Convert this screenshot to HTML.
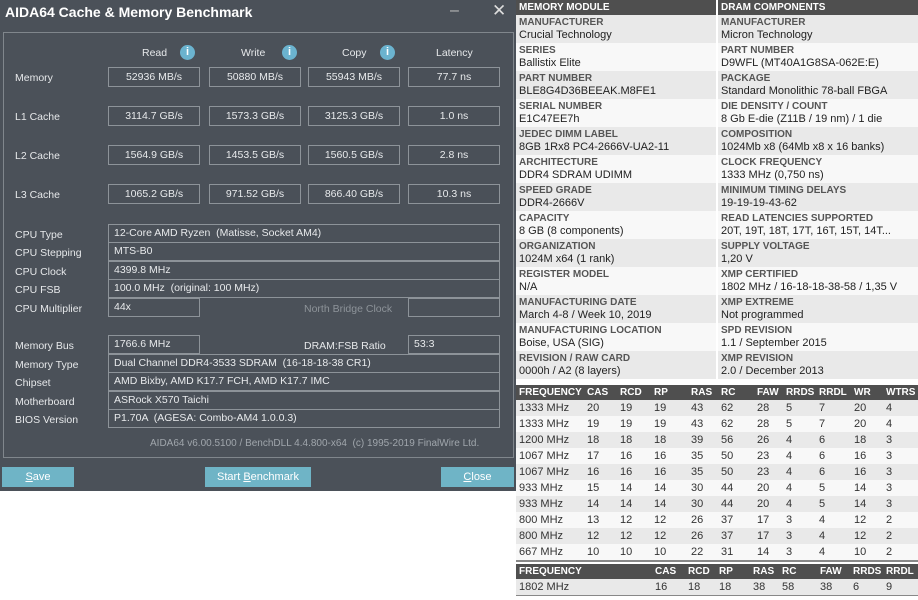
<!DOCTYPE html>
<html><head><meta charset="utf-8"><style>
*{margin:0;padding:0;box-sizing:border-box}
body{width:918px;height:600px;background:#fff;position:relative;overflow:hidden;font-family:"Liberation Sans",sans-serif}
#win{position:absolute;left:0;top:0;width:516px;height:491px;background:#4b5159;color:#e6e8ea}
.t{position:absolute;font-size:10.5px;white-space:nowrap}
.box{position:absolute;border:1px solid #8d9399;background:#4a5058;height:20px;font-size:10.5px;text-align:center;line-height:18px;color:#e8eaec}
.ib{position:absolute;border:1px solid #8d9399;height:19px;font-size:10.5px;line-height:17px;padding-left:5px;color:#e8eaec}
.info{position:absolute;width:15px;height:15px;border-radius:50%;background:#6bb3cf;color:#fff;font-weight:bold;font-size:11px;text-align:center;line-height:15px}
.btn{position:absolute;top:467px;height:20px;background:#6fb4c6;color:#fff;font-size:11px;text-align:center;line-height:20px}
#rp{position:absolute;left:516px;top:0;width:402px;height:600px;background:#fff}
.hd{position:absolute;height:15px;background:#4f4f4f;color:#fff;font-weight:bold;font-size:10px;line-height:15px;padding-left:3px}
.cell{position:absolute;height:28px;padding-left:3px;font-size:11px;color:#222}
.cell b{display:block;font-size:10px;color:#555;line-height:13px;margin-top:1px}
.cell span{display:block;line-height:13px}
.g{background:#e9e9e9}.w{background:#f8f8f8}
.tr{position:absolute;left:0;width:402px;height:16px;font-size:11px;color:#333;line-height:16px}
.tr i,.th i{position:absolute;font-style:normal}
.th{position:absolute;left:0;width:402px;height:15px;background:#4f4f4f;color:#fff;font-weight:bold;font-size:10px;line-height:15px}
</style></head><body>
<div id="win">
<div class="t" style="left:5px;top:4px;font-size:14px;font-weight:bold;color:#fff">AIDA64 Cache &amp; Memory Benchmark</div>
<div class="t" style="left:450px;top:2px;font-size:16px;color:#bbb">–</div>
<div class="t" style="left:492px;top:1px;font-size:17px;color:#ddd">✕</div>
<div style="position:absolute;left:3px;top:32px;width:511px;height:426px;border:1px solid #80868c"></div>
<div class="t" style="left:142px;top:47px">Read</div><div class="info" style="left:180px;top:45px">i</div>
<div class="t" style="left:241px;top:47px">Write</div><div class="info" style="left:282px;top:45px">i</div>
<div class="t" style="left:342px;top:47px">Copy</div><div class="info" style="left:380px;top:45px">i</div>
<div class="t" style="left:436px;top:47px">Latency</div>

<div class="t" style="left:15px;top:72px">Memory</div>
<div class="box" style="left:108px;top:67px;width:92px">52936 MB/s</div><div class="box" style="left:209px;top:67px;width:92px">50880 MB/s</div><div class="box" style="left:308px;top:67px;width:92px">55943 MB/s</div><div class="box" style="left:408px;top:67px;width:92px">77.7 ns</div>
<div class="t" style="left:15px;top:111px">L1 Cache</div>
<div class="box" style="left:108px;top:106px;width:92px">3114.7 GB/s</div><div class="box" style="left:209px;top:106px;width:92px">1573.3 GB/s</div><div class="box" style="left:308px;top:106px;width:92px">3125.3 GB/s</div><div class="box" style="left:408px;top:106px;width:92px">1.0 ns</div>
<div class="t" style="left:15px;top:150px">L2 Cache</div>
<div class="box" style="left:108px;top:145px;width:92px">1564.9 GB/s</div><div class="box" style="left:209px;top:145px;width:92px">1453.5 GB/s</div><div class="box" style="left:308px;top:145px;width:92px">1560.5 GB/s</div><div class="box" style="left:408px;top:145px;width:92px">2.8 ns</div>
<div class="t" style="left:15px;top:189px">L3 Cache</div>
<div class="box" style="left:108px;top:184px;width:92px">1065.2 GB/s</div><div class="box" style="left:209px;top:184px;width:92px">971.52 GB/s</div><div class="box" style="left:308px;top:184px;width:92px">866.40 GB/s</div><div class="box" style="left:408px;top:184px;width:92px">10.3 ns</div>

<div class="t" style="left:15px;top:229px">CPU Type</div><div class="ib" style="left:108px;top:224px;width:392px">12-Core AMD Ryzen &nbsp;(Matisse, Socket AM4)</div>
<div class="t" style="left:15px;top:247px">CPU Stepping</div><div class="ib" style="left:108px;top:242px;width:392px">MTS-B0</div>
<div class="t" style="left:15px;top:266px">CPU Clock</div><div class="ib" style="left:108px;top:261px;width:392px">4399.8 MHz</div>
<div class="t" style="left:15px;top:284px">CPU FSB</div><div class="ib" style="left:108px;top:279px;width:392px">100.0 MHz &nbsp;(original: 100 MHz)</div>
<div class="t" style="left:15px;top:303px">CPU Multiplier</div><div class="ib" style="left:108px;top:298px;width:92px">44x</div>
<div class="t" style="left:304px;top:303px;color:#8d9399">North Bridge Clock</div><div class="ib" style="left:408px;top:298px;width:92px"></div>

<div class="t" style="left:15px;top:340px">Memory Bus</div><div class="ib" style="left:108px;top:335px;width:92px">1766.6 MHz</div>
<div class="t" style="left:304px;top:340px">DRAM:FSB Ratio</div><div class="ib" style="left:408px;top:335px;width:92px">53:3</div>
<div class="t" style="left:15px;top:359px">Memory Type</div><div class="ib" style="left:108px;top:354px;width:392px">Dual Channel DDR4-3533 SDRAM &nbsp;(16-18-18-38 CR1)</div>
<div class="t" style="left:15px;top:377px">Chipset</div><div class="ib" style="left:108px;top:372px;width:392px">AMD Bixby, AMD K17.7 FCH, AMD K17.7 IMC</div>
<div class="t" style="left:15px;top:396px">Motherboard</div><div class="ib" style="left:108px;top:391px;width:392px">ASRock X570 Taichi</div>
<div class="t" style="left:15px;top:414px">BIOS Version</div><div class="ib" style="left:108px;top:409px;width:392px">P1.70A &nbsp;(AGESA: Combo-AM4 1.0.0.3)</div>
<div class="t" style="left:150px;top:438px;color:#a0a6ac;font-size:10px">AIDA64 v6.00.5100 / BenchDLL 4.4.800-x64 &nbsp;(c) 1995-2019 FinalWire Ltd.</div>
<div class="btn" style="left:2px;width:72px"><u>S</u>ave</div>
<div class="btn" style="left:205px;width:106px">Start <u>B</u>enchmark</div>
<div class="btn" style="left:441px;width:73px"><u>C</u>lose</div>
</div>

<div id="rp">
<div class="hd" style="left:0;top:0;width:200px">MEMORY MODULE</div>
<div class="hd" style="left:202px;top:0;width:200px">DRAM COMPONENTS</div>
<div class="cell g" style="left:0;top:15px;width:200px"><b>MANUFACTURER</b><span>Crucial Technology</span></div>
<div class="cell g" style="left:202px;top:15px;width:200px"><b>MANUFACTURER</b><span>Micron Technology</span></div>
<div class="cell w" style="left:0;top:43px;width:200px"><b>SERIES</b><span>Ballistix Elite</span></div>
<div class="cell w" style="left:202px;top:43px;width:200px"><b>PART NUMBER</b><span>D9WFL (MT40A1G8SA-062E:E)</span></div>
<div class="cell g" style="left:0;top:71px;width:200px"><b>PART NUMBER</b><span>BLE8G4D36BEEAK.M8FE1</span></div>
<div class="cell g" style="left:202px;top:71px;width:200px"><b>PACKAGE</b><span>Standard Monolithic 78-ball FBGA</span></div>
<div class="cell w" style="left:0;top:99px;width:200px"><b>SERIAL NUMBER</b><span>E1C47EE7h</span></div>
<div class="cell w" style="left:202px;top:99px;width:200px"><b>DIE DENSITY / COUNT</b><span>8 Gb E-die (Z11B / 19 nm) / 1 die</span></div>
<div class="cell g" style="left:0;top:127px;width:200px"><b>JEDEC DIMM LABEL</b><span>8GB 1Rx8 PC4-2666V-UA2-11</span></div>
<div class="cell g" style="left:202px;top:127px;width:200px"><b>COMPOSITION</b><span>1024Mb x8 (64Mb x8 x 16 banks)</span></div>
<div class="cell w" style="left:0;top:155px;width:200px"><b>ARCHITECTURE</b><span>DDR4 SDRAM UDIMM</span></div>
<div class="cell w" style="left:202px;top:155px;width:200px"><b>CLOCK FREQUENCY</b><span>1333 MHz (0,750 ns)</span></div>
<div class="cell g" style="left:0;top:183px;width:200px"><b>SPEED GRADE</b><span>DDR4-2666V</span></div>
<div class="cell g" style="left:202px;top:183px;width:200px"><b>MINIMUM TIMING DELAYS</b><span>19-19-19-43-62</span></div>
<div class="cell w" style="left:0;top:211px;width:200px"><b>CAPACITY</b><span>8 GB (8 components)</span></div>
<div class="cell w" style="left:202px;top:211px;width:200px"><b>READ LATENCIES SUPPORTED</b><span>20T, 19T, 18T, 17T, 16T, 15T, 14T...</span></div>
<div class="cell g" style="left:0;top:239px;width:200px"><b>ORGANIZATION</b><span>1024M x64 (1 rank)</span></div>
<div class="cell g" style="left:202px;top:239px;width:200px"><b>SUPPLY VOLTAGE</b><span>1,20 V</span></div>
<div class="cell w" style="left:0;top:267px;width:200px"><b>REGISTER MODEL</b><span>N/A</span></div>
<div class="cell w" style="left:202px;top:267px;width:200px"><b>XMP CERTIFIED</b><span>1802 MHz / 16-18-18-38-58 / 1,35 V</span></div>
<div class="cell g" style="left:0;top:295px;width:200px"><b>MANUFACTURING DATE</b><span>March 4-8 / Week 10, 2019</span></div>
<div class="cell g" style="left:202px;top:295px;width:200px"><b>XMP EXTREME</b><span>Not programmed</span></div>
<div class="cell w" style="left:0;top:323px;width:200px"><b>MANUFACTURING LOCATION</b><span>Boise, USA (SIG)</span></div>
<div class="cell w" style="left:202px;top:323px;width:200px"><b>SPD REVISION</b><span>1.1 / September 2015</span></div>
<div class="cell g" style="left:0;top:351px;width:200px"><b>REVISION / RAW CARD</b><span>0000h / A2 (8 layers)</span></div>
<div class="cell g" style="left:202px;top:351px;width:200px"><b>XMP REVISION</b><span>2.0 / December 2013</span></div>

<div class="th" style="top:385px"><i style="left:3px">FREQUENCY</i><i style="left:71px">CAS</i><i style="left:104px">RCD</i><i style="left:138px">RP</i><i style="left:175px">RAS</i><i style="left:205px">RC</i><i style="left:241px">FAW</i><i style="left:270px">RRDS</i><i style="left:303px">RRDL</i><i style="left:338px">WR</i><i style="left:370px">WTRS</i></div>
<div class="tr g" style="top:400px"><i style="left:3px">1333 MHz</i><i style="left:71px">20</i><i style="left:104px">19</i><i style="left:138px">19</i><i style="left:175px">43</i><i style="left:205px">62</i><i style="left:241px">28</i><i style="left:270px">5</i><i style="left:303px">7</i><i style="left:338px">20</i><i style="left:370px">4</i></div>
<div class="tr w" style="top:416px"><i style="left:3px">1333 MHz</i><i style="left:71px">19</i><i style="left:104px">19</i><i style="left:138px">19</i><i style="left:175px">43</i><i style="left:205px">62</i><i style="left:241px">28</i><i style="left:270px">5</i><i style="left:303px">7</i><i style="left:338px">20</i><i style="left:370px">4</i></div>
<div class="tr g" style="top:432px"><i style="left:3px">1200 MHz</i><i style="left:71px">18</i><i style="left:104px">18</i><i style="left:138px">18</i><i style="left:175px">39</i><i style="left:205px">56</i><i style="left:241px">26</i><i style="left:270px">4</i><i style="left:303px">6</i><i style="left:338px">18</i><i style="left:370px">3</i></div>
<div class="tr w" style="top:448px"><i style="left:3px">1067 MHz</i><i style="left:71px">17</i><i style="left:104px">16</i><i style="left:138px">16</i><i style="left:175px">35</i><i style="left:205px">50</i><i style="left:241px">23</i><i style="left:270px">4</i><i style="left:303px">6</i><i style="left:338px">16</i><i style="left:370px">3</i></div>
<div class="tr g" style="top:464px"><i style="left:3px">1067 MHz</i><i style="left:71px">16</i><i style="left:104px">16</i><i style="left:138px">16</i><i style="left:175px">35</i><i style="left:205px">50</i><i style="left:241px">23</i><i style="left:270px">4</i><i style="left:303px">6</i><i style="left:338px">16</i><i style="left:370px">3</i></div>
<div class="tr w" style="top:480px"><i style="left:3px">933 MHz</i><i style="left:71px">15</i><i style="left:104px">14</i><i style="left:138px">14</i><i style="left:175px">30</i><i style="left:205px">44</i><i style="left:241px">20</i><i style="left:270px">4</i><i style="left:303px">5</i><i style="left:338px">14</i><i style="left:370px">3</i></div>
<div class="tr g" style="top:496px"><i style="left:3px">933 MHz</i><i style="left:71px">14</i><i style="left:104px">14</i><i style="left:138px">14</i><i style="left:175px">30</i><i style="left:205px">44</i><i style="left:241px">20</i><i style="left:270px">4</i><i style="left:303px">5</i><i style="left:338px">14</i><i style="left:370px">3</i></div>
<div class="tr w" style="top:512px"><i style="left:3px">800 MHz</i><i style="left:71px">13</i><i style="left:104px">12</i><i style="left:138px">12</i><i style="left:175px">26</i><i style="left:205px">37</i><i style="left:241px">17</i><i style="left:270px">3</i><i style="left:303px">4</i><i style="left:338px">12</i><i style="left:370px">2</i></div>
<div class="tr g" style="top:528px"><i style="left:3px">800 MHz</i><i style="left:71px">12</i><i style="left:104px">12</i><i style="left:138px">12</i><i style="left:175px">26</i><i style="left:205px">37</i><i style="left:241px">17</i><i style="left:270px">3</i><i style="left:303px">4</i><i style="left:338px">12</i><i style="left:370px">2</i></div>
<div class="tr w" style="top:544px"><i style="left:3px">667 MHz</i><i style="left:71px">10</i><i style="left:104px">10</i><i style="left:138px">10</i><i style="left:175px">22</i><i style="left:205px">31</i><i style="left:241px">14</i><i style="left:270px">3</i><i style="left:303px">4</i><i style="left:338px">10</i><i style="left:370px">2</i></div>
<div style="position:absolute;left:0;top:560px;width:402px;height:2px;background:#888"></div>
<div class="th" style="top:564px"><i style="left:3px">FREQUENCY</i><i style="left:139px">CAS</i><i style="left:172px">RCD</i><i style="left:203px">RP</i><i style="left:237px">RAS</i><i style="left:266px">RC</i><i style="left:304px">FAW</i><i style="left:337px">RRDS</i><i style="left:370px">RRDL</i></div>
<div class="tr g" style="top:579px"><i style="left:3px">1802 MHz</i><i style="left:139px">16</i><i style="left:172px">18</i><i style="left:203px">18</i><i style="left:237px">38</i><i style="left:266px">58</i><i style="left:304px">38</i><i style="left:337px">6</i><i style="left:370px">9</i></div>
<div style="position:absolute;left:0;top:595px;width:402px;height:1px;background:#888"></div>
</div>
</body></html>
